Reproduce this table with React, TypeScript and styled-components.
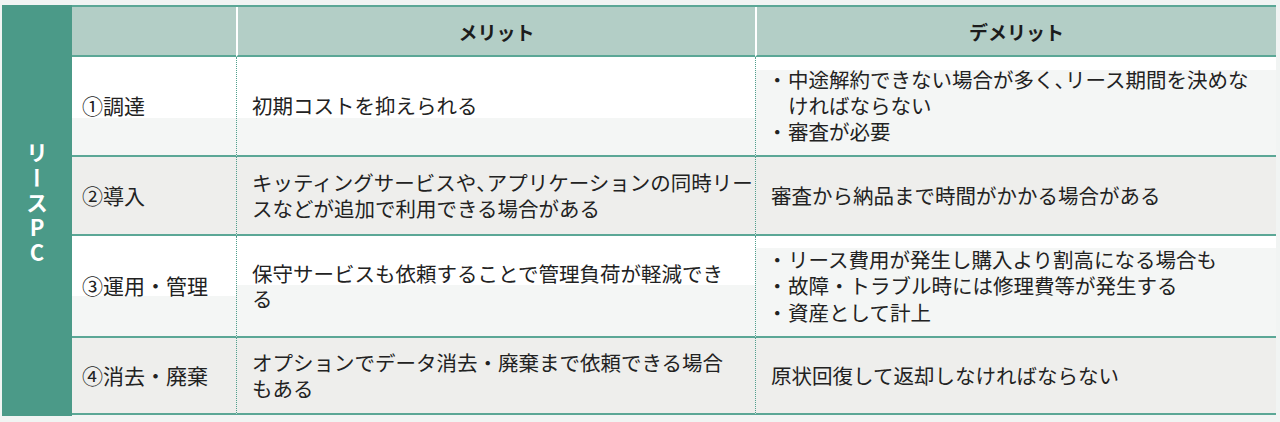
import React from "react";
import styled, { createGlobalStyle } from "styled-components";

type Row = {
	label: string;
	merit: string[];
	demerit: string[][];
	grey?: boolean;
	split?: [number, number, number];
};

// 各行の改行位置は元の表に合わせている
const rows: Row[] = [
	{
		label: "①調達",
		merit: ["初期コストを抑えられる"],
		demerit: [["中途解約できない場合が多く、リース期間を決めな", "ければならない"], ["審査が必要"]],
		split: [61, 61, 13],
	},
	{
		label: "②導入",
		merit: ["キッティングサービスや、アプリケーションの同時リー", "スなどが追加で利用できる場合がある"],
		demerit: [["審査から納品まで時間がかかる場合がある"]],
		grey: true,
	},
	{
		label: "③運用・管理",
		merit: ["保守サービスも依頼することで管理負荷が軽減でき", "る"],
		demerit: [["リース費用が発生し購入より割高になる場合も"], ["故障・トラブル時には修理費等が発生する"], ["資産として計上"]],
		split: [60, 49, 12],
	},
	{
		label: "④消去・廃棄",
		merit: ["オプションでデータ消去・廃棄まで依頼できる場合", "もある"],
		demerit: [["原状回復して返却しなければならない"]],
		grey: true,
	},
];

const heights = [98, 77, 100, 75];

function Lines({ lines }: { lines: string[] }) {
	return (
		<>
			{lines.map((line, i) => (
				<Line key={i}>
					{line.split("、").map((part, j) => (
						<React.Fragment key={j}>
							{j > 0 && <Comma>、</Comma>}
							{part}
						</React.Fragment>
					))}
				</Line>
			))}
		</>
	);
}

function App() {
	return (
		<>
			<GlobalStyle />
			<Page>
				<Band>
					<BandText>リースPC</BandText>
				</Band>
				<Table>
					<HeadCell />
					<HeadCell $divider>メリット</HeadCell>
					<HeadCell $divider>デメリット</HeadCell>
					{rows.map((row, i) => (
						<React.Fragment key={row.label}>
							<LabelCell $h={heights[i]} $grey={row.grey} $split={row.split?.[0]}>
								{row.label}
							</LabelCell>
							<BodyCell $h={heights[i]} $grey={row.grey} $split={row.split?.[1]}>
								<div>
									<Lines lines={row.merit} />
								</div>
							</BodyCell>
							<BodyCell $h={heights[i]} $grey={row.grey} $split={row.split?.[2]}>
								{row.demerit.length === 1 ? (
									<div>
										<Lines lines={row.demerit[0]} />
									</div>
								) : (
									<List>
										{row.demerit.map((d, k) => (
											<li key={k}>
												<Lines lines={d} />
											</li>
										))}
									</List>
								)}
							</BodyCell>
						</React.Fragment>
					))}
				</Table>
			</Page>
		</>
	);
}

export default App;

const GlobalStyle = createGlobalStyle`
	body {
		margin: 0;
		background: #f1f4f3;
		font-family: "Noto Sans CJK JP", "Noto Sans", sans-serif;
		color: #222;
	}
`;

const Page = styled.div`
	width: 1280px;
	height: 422px;
	padding: 5px 4px 0 2px;
	box-sizing: border-box;
	display: flex;
`;

const Band = styled.div`
	width: 70px;
	height: 411px;
	background: #4b9a88;
	display: flex;
	align-items: center;
	justify-content: center;
`;

const BandText = styled.div`
	writing-mode: vertical-rl;
	text-orientation: upright;
	color: #fff;
	font-size: 22px;
	font-weight: bold;
	letter-spacing: 3px;
	line-height: 1;
	margin-top: -12px;
`;

const Table = styled.div`
	flex: 1;
	display: grid;
	grid-template-columns: 164px 519px 1fr;
	grid-auto-rows: min-content;
	align-content: start;
	border-top: 2px solid #5ba796;
`;

const HeadCell = styled.div<{ $divider?: boolean }>`
	height: 48px;
	background: #b3cec6;
	border-bottom: 2px solid #5ba796;
	border-left: ${(p) => (p.$divider ? "2px solid #fff" : "none")};
	display: flex;
	align-items: center;
	justify-content: center;
	font-size: 19px;
	font-weight: bold;
	color: #1c1c1c;
`;

const cellBg = (grey?: boolean, split?: number) => {
	if (grey) return "#eeeeec";
	if (split) return `linear-gradient(#fff 0 ${split}px, #f4f6f5 ${split}px)`;
	return "#f4f6f5";
};

const BaseCell = styled.div<{ $h: number; $grey?: boolean; $split?: number }>`
	height: ${(p) => p.$h}px;
	background: ${(p) => cellBg(p.$grey, p.$split)};
	border-bottom: 2px solid #5ba796;
	display: flex;
	align-items: center;
	font-size: 20.5px;
	line-height: 25.5px;
`;

const LabelCell = styled(BaseCell)`
	padding-left: 10px;
	font-size: 21px;
`;

const BodyCell = styled(BaseCell)`
	padding: 0 2px 0 15px;
	border-left: 1px dotted #4f9e8c;
`;

const Line = styled.div`
	white-space: nowrap;
`;

const Comma = styled.span`
	letter-spacing: -10px;
`;

const List = styled.ul`
	margin: 0;
	padding: 0;
	list-style: none;
	li {
		position: relative;
		padding-left: 17px;
	}
	li + li {
		margin-top: 1px;
	}
	li::before {
		content: "・";
		position: absolute;
		left: -4px;
	}
`;
